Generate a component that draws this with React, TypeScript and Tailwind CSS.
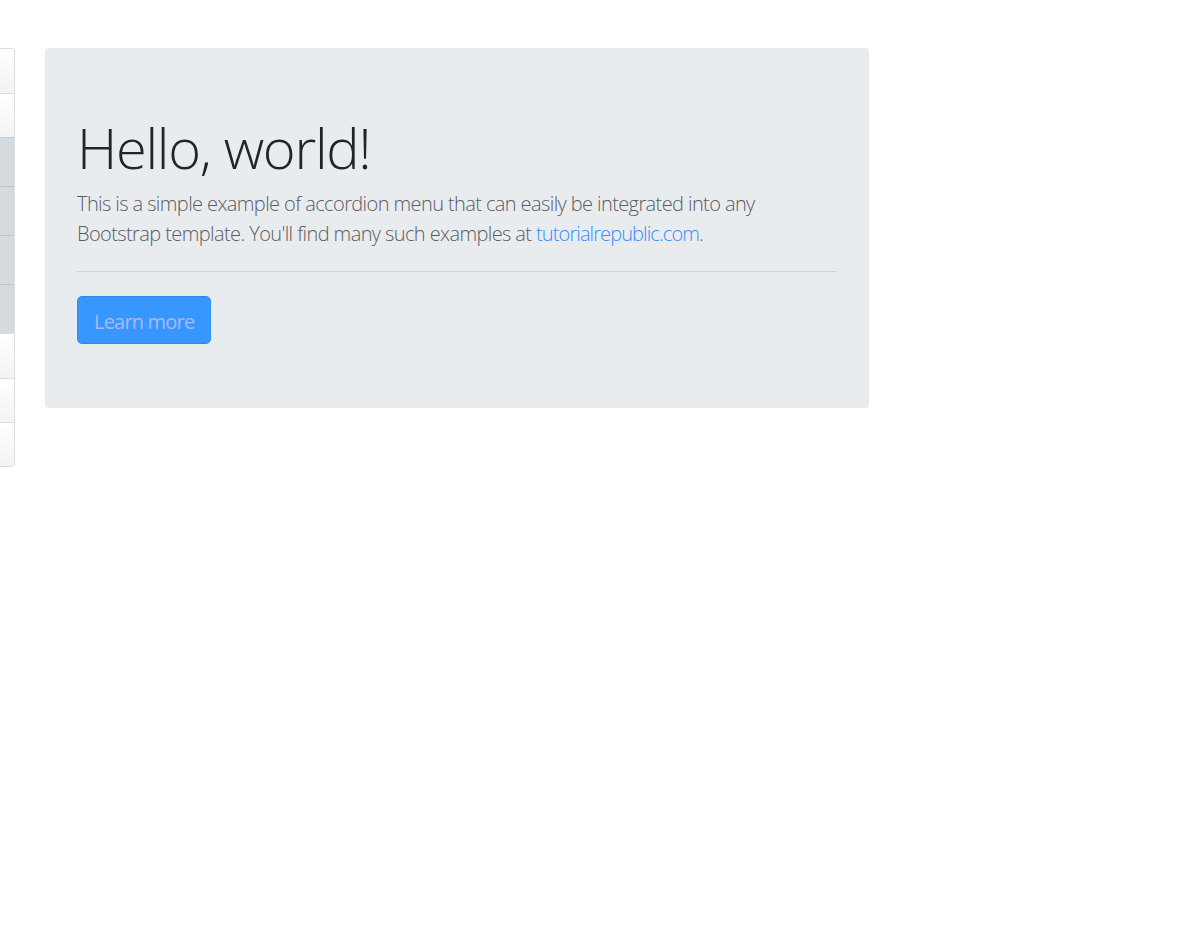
import React from "react";

const rows = [
  { h: "h-[44px]", gray: false },
  { h: "h-[44px]", gray: false },
  { h: "h-[49px]", gray: true },
  { h: "h-[49px]", gray: true },
  { h: "h-[49px]", gray: true },
  { h: "h-[49px]", gray: true },
  { h: "h-[45px]", gray: false },
  { h: "h-[44px]", gray: false },
  { h: "h-[44px]", gray: false },
];

export default function App() {
  return (
    <div className="min-h-[952px] w-[1200px] bg-white pt-[48px] flex items-start font-['Open_Sans',sans-serif]">
      <div className="w-[15px] flex flex-col border border-l-0 border-[#dddddd] rounded-r-[4px] overflow-hidden">
        {rows.map((r, i) => {
          const sep = i === 0 ? "" : r.gray && rows[i - 1].gray ? "border-t border-[#bfc4c9]" : r.gray ? "border-t border-[#c8cdd2]" : "border-t border-[#dddddd]";
          return (
            <div
              key={i}
              className={`${r.h} ${sep} ${r.gray ? "bg-[#d5dadf]" : "bg-gradient-to-b from-white to-[#f3f3f3]"}`}
            />
          );
        })}
      </div>
      <div className="ml-[30px] w-[824px] bg-[#e9ecef] rounded-[4px] px-[32px] pt-[66px] pb-[64px]">
        <h1 className="text-[56px] leading-[67px] font-light text-[#212529] tracking-[-1.3px] mb-[8px]">
          Hello, world!
        </h1>
        <p className="text-[20px] leading-[30px] font-light text-[#5a5e63] tracking-[-0.6px]">
          This is a simple example of accordion menu that can easily be integrated into any Bootstrap template. You'll find many such examples at{" "}
          <a className="text-[#3a8ef6] tracking-[-0.9px]">tutorialrepublic.com</a>.
        </p>
        <hr className="mt-[22px] mb-[24px] border-0 border-t border-[#d0d3d6]" />
        <button className="h-[48px] px-[16px] pt-[3px] rounded-[5px] bg-[#3797ff] border border-[#2f8cf0] text-[20px] leading-[30px] text-[#a9b9f8] font-normal tracking-[-0.8px]">
          Learn more
        </button>
      </div>
    </div>
  );
}
